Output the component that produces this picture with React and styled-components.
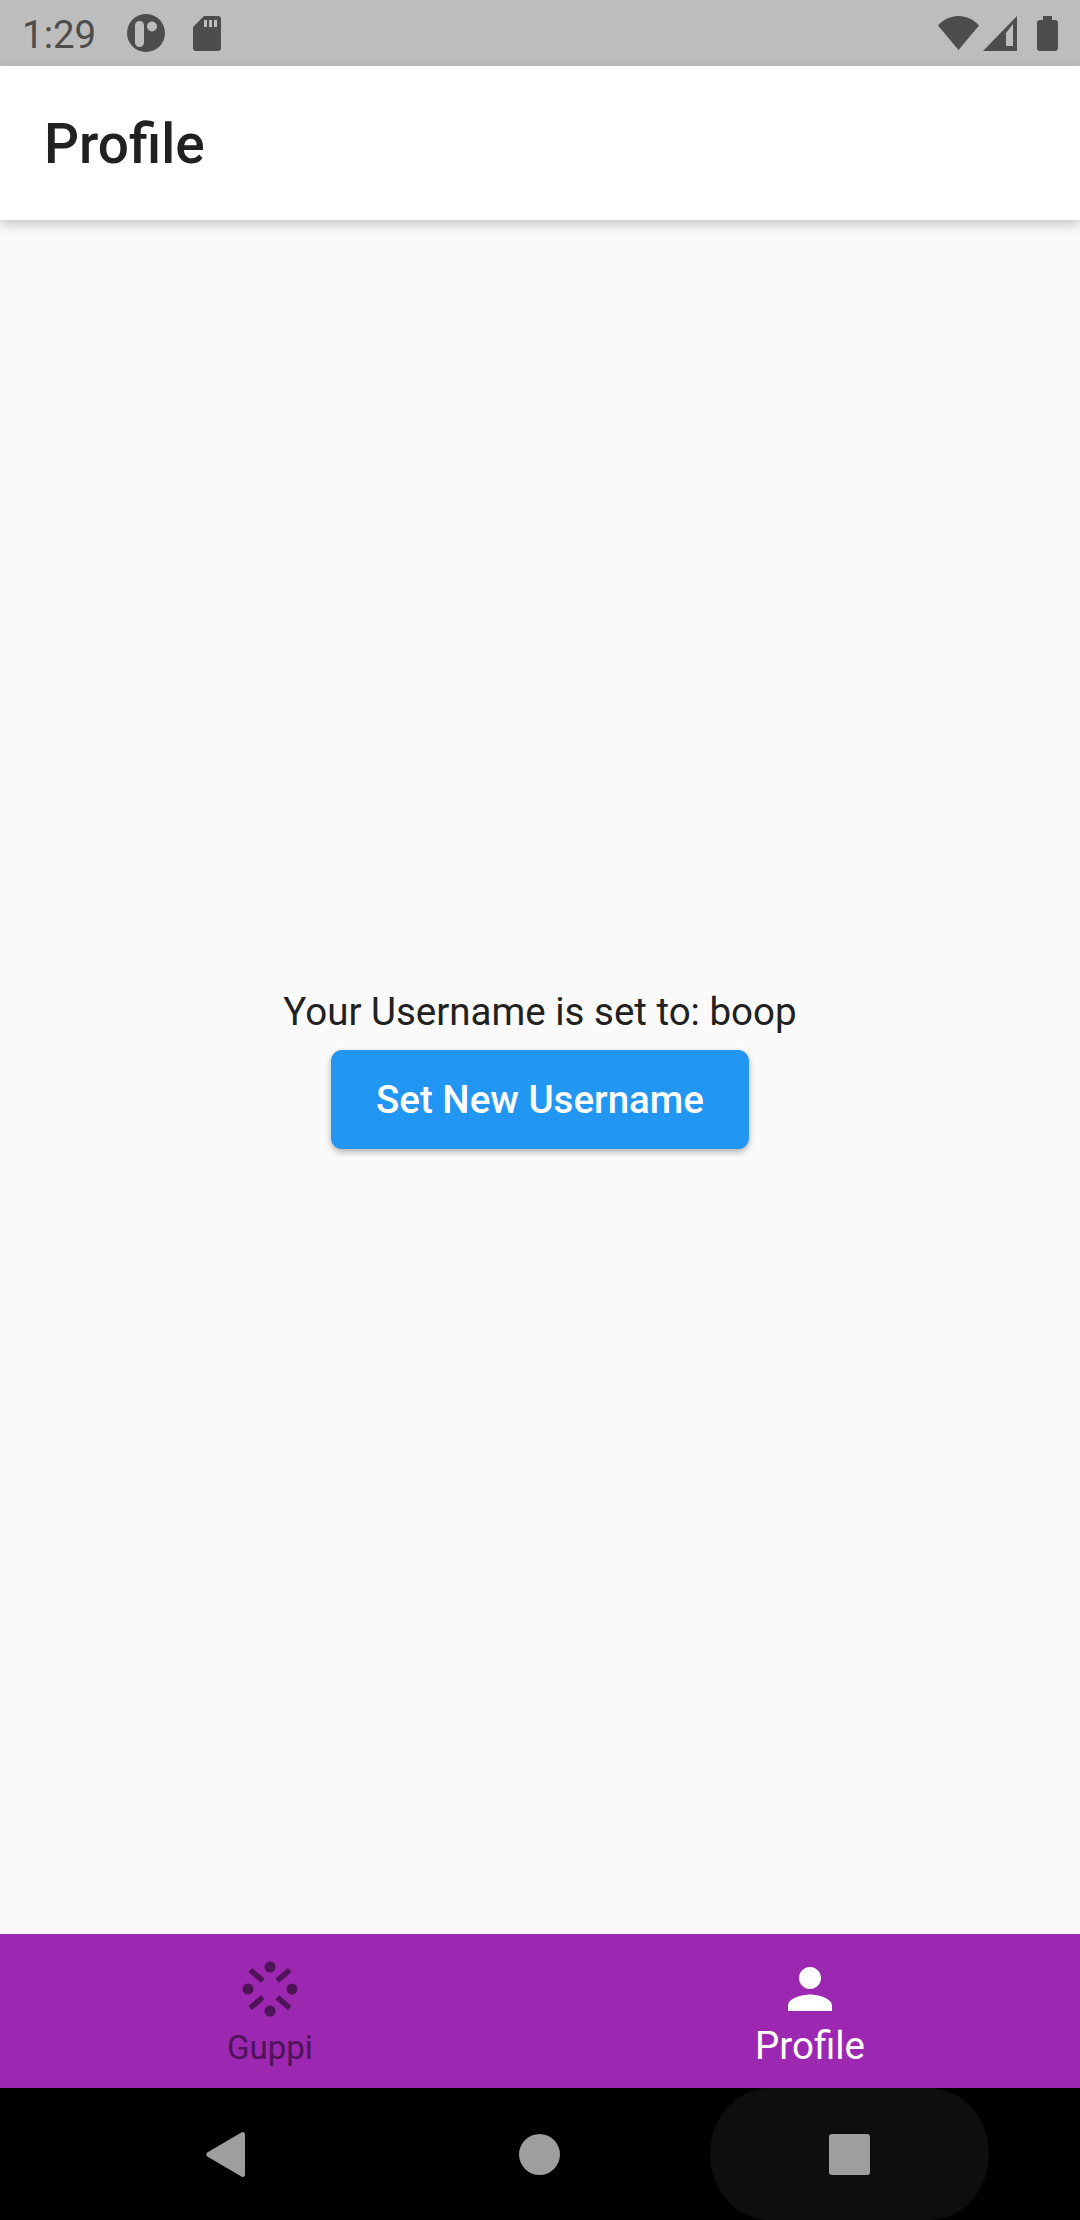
import React from 'react';
import styled, {createGlobalStyle} from 'styled-components';

const GlobalStyle = createGlobalStyle`
    html, body {
        margin: 0;
        padding: 0;
        background: #fafafa;
    }
    * {
        box-sizing: border-box;
    }
`;
const Screen = styled.div`
    display: flex;
    flex-direction: column;
    width: 1080px;
    height: 2220px;
    overflow: hidden;
    font-family: Roboto, "Liberation Sans", sans-serif;
`;
const StatusBar = styled.div`
    display: flex;
    align-items: center;
    flex: 0 0 66px;
    padding: 0 22px 0 22px;
    background: #bdbdbd;
    color: #4d4d4d;
`;
const Clock = styled.span`
    width: 105px;
    padding-top: 3px;
    font-size: 38.5px;
    line-height: 63px;
`;
const StatusGroup = styled.div`
    display: flex;
    align-items: center;
    gap: ${p => p.$gap}px;
    margin-left: ${p => p.$push ? 'auto' : '0'};
`;
const BatteryIcon = styled.svg`
    margin-left: 16px;
`;
const AppBar = styled.header`
    position: relative;
    z-index: 1;
    display: flex;
    align-items: center;
    flex: 0 0 154px;
    padding: 2px 44px 0;
    background: #fff;
    box-shadow: 0 5px 11px rgba(0, 0, 0, 0.2);
`;
const Title = styled.h1`
    margin: 0;
    font-size: 55px;
    font-weight: 500;
    color: #212121;
`;
const Body = styled.main`
    display: flex;
    flex: 1;
    flex-direction: column;
    align-items: center;
    justify-content: center;
    background: #fafafa;
`;
const Message = styled.div`
    font-size: 38.5px;
    line-height: 45px;
    color: #212121;
`;
const PrimaryButton = styled.button`
    height: 99px;
    margin: 16px 0 17px;
    padding: 0 45px;
    border: 0;
    border-radius: 11px;
    background: #2196f3;
    color: #fff;
    font-family: inherit;
    font-size: 38.5px;
    font-weight: 500;
    box-shadow: 0 3px 6px rgba(0, 0, 0, 0.3);
`;
const BottomNav = styled.nav`
    display: flex;
    flex: 0 0 154px;
    background: #9c27b0;
`;
const Tab = styled.div`
    display: flex;
    flex: 1;
    flex-direction: column;
    align-items: center;
    padding-top: 22px;
    color: ${p => p.$active ? '#fff' : '#4e1358'};
`;
const TabLabel = styled.span`
    font-size: ${p => p.$active ? 38.5 : 33}px;
    line-height: 45px;
    margin-top: ${p => p.$active ? 1 : 3}px;
`;
const SystemNav = styled.div`
    display: flex;
    flex: 0 0 132px;
    align-items: center;
    background: #000;
`;
const SystemSlot = styled.div`
    display: flex;
    align-items: center;
    justify-content: center;
    width: ${p => p.$width}px;
    height: 132px;
    margin-left: ${p => p.$left}px;
`;
const RecentsSlot = styled(SystemSlot)`
    border-radius: 60px / 66px;
    background: #0e0e0e;
`;
const BackIcon = styled.svg`
    display: block;
`;
const HomeDot = styled.div`
    width: 41px;
    height: 41px;
    border-radius: 50%;
    background: #9e9e9e;
`;
const RecentsSquare = styled.div`
    width: 41px;
    height: 41px;
    border-radius: 3px;
    background: #9e9e9e;
`;

function GuppiIcon(){
    return (
        <svg width="66" height="66" viewBox="0 0 66 66" fill="currentColor" stroke="currentColor">
            <circle cx="33" cy="11" r="5.5" stroke="none"/>
            <circle cx="33" cy="55" r="5.5" stroke="none"/>
            <circle cx="11" cy="33" r="5.5" stroke="none"/>
            <circle cx="55" cy="33" r="5.5" stroke="none"/>
            <path strokeWidth="5.5" d="M13.300 14L25.700 24.600M52.700 14L40.300 24.600M13.300 52L25.700 41.400M52.700 52L40.300 41.400"/>
        </svg>
    );
}
function PersonIcon(){
    return (
        <svg width="66" height="66" viewBox="0 0 24 24" fill="currentColor">
            <path d="M12 12c2.21 0 4-1.79 4-4s-1.79-4-4-4-4 1.79-4 4 1.79 4 4 4zm0 2c-2.67 0-8 1.34-8 4v2h16v-2c0-2.66-5.33-4-8-4z"/>
        </svg>
    );
}

function App(){
    return (
        <Screen>
            <GlobalStyle />
            <StatusBar>
                <Clock>1:29</Clock>
                <StatusGroup $gap={28}>
                    <svg width="38" height="38" viewBox="0 0 38 38">
                        <circle cx="19" cy="19" r="19" fill="#4d4d4d"/>
                        <rect x="8" y="7" width="9" height="26" rx="4.500" fill="#bdbdbd"/>
                        <circle cx="25" cy="12.500" r="5" fill="#bdbdbd"/>
                    </svg>
                    <svg width="28" height="35" viewBox="0 0 28 35">
                        <path fill="#4d4d4d" d="M11 0h14a3 3 0 0 1 3 3v29a3 3 0 0 1-3 3H3a3 3 0 0 1-3-3V11z"/>
                        <path fill="#bdbdbd" d="M11 4h3v7h-3zM16 4h3v7h-3zM21 4h3v7h-3z"/>
                    </svg>
                </StatusGroup>
                <StatusGroup $gap={4} $push>
                    <svg width="41" height="35" viewBox="0 0 41 35">
                        <path fill="#4d4d4d" d="M20.500 34L0 9.500C5.500 3.500 12.500 0 20.500 0S35.500 3.500 41 9.500z"/>
                    </svg>
                    <svg width="34" height="35" viewBox="0 0 34 35">
                        <path fill="#4d4d4d" fillRule="evenodd" d="M0 35L34 0v35zM23 17v13h7V8z"/>
                    </svg>
                    <BatteryIcon width="21" height="35" viewBox="0 0 21 35">
                        <path fill="#4d4d4d" d="M6 0h9v4h3a3 3 0 0 1 3 3v25a3 3 0 0 1-3 3H3a3 3 0 0 1-3-3V7a3 3 0 0 1 3-3h3z"/>
                    </BatteryIcon>
                </StatusGroup>
            </StatusBar>
            <AppBar>
                <Title>Profile</Title>
            </AppBar>
            <Body>
                <Message>Your Username is set to: boop</Message>
                <PrimaryButton>Set New Username</PrimaryButton>
            </Body>
            <BottomNav>
                <Tab>
                    <GuppiIcon />
                    <TabLabel>Guppi</TabLabel>
                </Tab>
                <Tab $active>
                    <PersonIcon />
                    <TabLabel $active>Profile</TabLabel>
                </Tab>
            </BottomNav>
            <SystemNav>
                <SystemSlot $width={39} $left={206}>
                    <BackIcon width="39" height="45" viewBox="0 0 39 45">
                        <path fill="#9e9e9e" d="M35 .8a2.300 2.300 0 0 1 4 1.700v40a2.300 2.300 0 0 1-4 1.700L1.200 24.500a3 3 0 0 1 0-4z"/>
                    </BackIcon>
                </SystemSlot>
                <SystemSlot $width={41} $left={274}>
                    <HomeDot />
                </SystemSlot>
                <RecentsSlot $width={279} $left={150}>
                    <RecentsSquare />
                </RecentsSlot>
            </SystemNav>
        </Screen>
    );
}
export default App;
